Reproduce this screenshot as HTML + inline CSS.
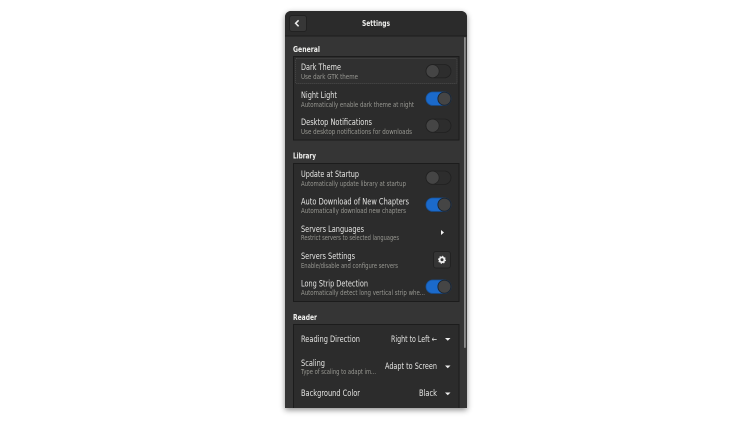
<!DOCTYPE html>
<html><head><meta charset="utf-8"><style>
html,body{margin:0;padding:0;background:#fff;width:752px;height:423px;overflow:hidden}
svg{display:block}
#c{filter:blur(.35px)}
text{font-family:"DejaVu Sans","Liberation Sans",sans-serif;font-size:8.5px}
.h{fill:#f0f0ee;font-weight:bold;font-size:8.2px}
.t{fill:#e6e6e4}
.s{fill:#989892;font-size:6.8px}
.l{fill:#2c2c2c;stroke:#1c1c1c;stroke-width:1}
</style></head><body>
<svg width="752" height="423" viewBox="0 0 752 423" xmlns="http://www.w3.org/2000/svg">
<defs>
<filter id="sh" x="-20%" y="-10%" width="140%" height="120%"><feDropShadow dx="0" dy="2" stdDeviation="3" flood-color="#000" flood-opacity=".45"/></filter>
<clipPath id="win"><path d="M285 408V17a6 6 0 0 1 6-6h170a6 6 0 0 1 6 6v391z"/></clipPath>
<g id="off"><rect x="0" y="0" width="25" height="13.4" rx="6.7" fill="#2d2d2d" stroke="#202020" stroke-width=".8"/><circle cx="6.6" cy="6.7" r="6.5" fill="#454545" stroke="#222" stroke-width=".7"/></g>
<g id="on"><rect x="0" y="0" width="25" height="13.4" rx="6.7" fill="#1b6acb" stroke="#15539e" stroke-width=".8"/><circle cx="18.4" cy="6.7" r="6.5" fill="#454545" stroke="#1a2430" stroke-width=".9"/></g>
</defs>
<path d="M285 408V17a6 6 0 0 1 6-6h170a6 6 0 0 1 6 6v391z" fill="#353535" filter="url(#sh)"/>
<g id="c" clip-path="url(#win)">
<rect x="285" y="11" width="182" height="24.5" fill="#2b2b2b"/>
<rect x="285" y="35.5" width="182" height="1" fill="#1d1d1d"/>
<rect x="289.500" y="15.500" width="17" height="16" rx="2.500" fill="#373737" stroke="#222"/>
<path d="M298.600 20.300L295.600 23.300L298.600 26.300" fill="none" stroke="#eee" stroke-width="1.500"/>
<text class="h" x="362" y="26" textLength="28" lengthAdjust="spacingAndGlyphs">Settings</text>
<rect x="464" y="37" width="1.800" height="311" rx=".9" fill="#8b8b8b"/>

<text class="h" x="293" y="52" textLength="27" lengthAdjust="spacingAndGlyphs">General</text>
<rect class="l" x="293.500" y="56.500" width="165.500" height="83.500"/>
<rect x="295.500" y="58.500" width="161.500" height="25" rx="1" fill="#303030" stroke="#555" stroke-width=".7" stroke-dasharray="1 1"/>
<text class="t" x="301" y="70" textLength="40" lengthAdjust="spacingAndGlyphs">Dark Theme</text>
<text class="s" x="301" y="79" textLength="57" lengthAdjust="spacingAndGlyphs">Use dark GTK theme</text>
<use href="#off" x="426" y="64.500"/>
<text class="t" x="301" y="98" textLength="36" lengthAdjust="spacingAndGlyphs">Night Light</text>
<text class="s" x="301" y="107" textLength="113" lengthAdjust="spacingAndGlyphs">Automatically enable dark theme at night</text>
<use href="#on" x="426" y="92"/>
<text class="t" x="301" y="125" textLength="71" lengthAdjust="spacingAndGlyphs">Desktop Notifications</text>
<text class="s" x="301" y="134" textLength="111" lengthAdjust="spacingAndGlyphs">Use desktop notifications for downloads</text>
<use href="#off" x="426" y="119"/>

<text class="h" x="293" y="158.500" textLength="23" lengthAdjust="spacingAndGlyphs">Library</text>
<rect class="l" x="293.500" y="163.500" width="165.500" height="138"/>
<text class="t" x="301" y="177" textLength="58" lengthAdjust="spacingAndGlyphs">Update at Startup</text>
<text class="s" x="301" y="186" textLength="105" lengthAdjust="spacingAndGlyphs">Automatically update library at startup</text>
<use href="#off" x="426" y="171"/>
<text class="t" x="301" y="204.500" textLength="108" lengthAdjust="spacingAndGlyphs">Auto Download of New Chapters</text>
<text class="s" x="301" y="213" textLength="105" lengthAdjust="spacingAndGlyphs">Automatically download new chapters</text>
<use href="#on" x="426" y="198"/>
<text class="t" x="301" y="232" textLength="63" lengthAdjust="spacingAndGlyphs">Servers Languages</text>
<text class="s" x="301" y="240" textLength="98" lengthAdjust="spacingAndGlyphs">Restrict servers to selected languages</text>
<path d="M441 230L444 232.500L441 235z" fill="#f2f2f2"/>
<text class="t" x="301" y="259" textLength="54" lengthAdjust="spacingAndGlyphs">Servers Settings</text>
<text class="s" x="301" y="268" textLength="97" lengthAdjust="spacingAndGlyphs">Enable/disable and configure servers</text>
<rect x="433.500" y="251.500" width="17" height="16.500" rx="2.500" fill="#353535" stroke="#222"/>
<circle cx="442" cy="259.800" r="2.400" fill="none" stroke="#f2f2f2" stroke-width="1.800"/>
<circle cx="442" cy="259.800" r="3.500" fill="none" stroke="#f2f2f2" stroke-width="1" stroke-dasharray="1.300 1.450"/>
<text class="t" x="301" y="286.500" textLength="67" lengthAdjust="spacingAndGlyphs">Long Strip Detection</text>
<text class="s" x="301" y="295" textLength="124" lengthAdjust="spacingAndGlyphs">Automatically detect long vertical strip whe...</text>
<use href="#on" x="426" y="280"/>

<text class="h" x="293" y="320" textLength="24" lengthAdjust="spacingAndGlyphs">Reader</text>
<rect class="l" x="293.500" y="324.500" width="165.500" height="100"/>
<text class="t" x="301" y="342" textLength="59" lengthAdjust="spacingAndGlyphs">Reading Direction</text>
<text class="t" x="391" y="342" textLength="46" lengthAdjust="spacingAndGlyphs">Right to Left ←</text>
<path d="M445 338h5.500l-2.750 2.800z" fill="#eee"/>
<text class="t" x="301" y="366" textLength="24" lengthAdjust="spacingAndGlyphs">Scaling</text>
<text class="s" x="301" y="374" textLength="75" lengthAdjust="spacingAndGlyphs">Type of scaling to adapt im...</text>
<text class="t" x="385" y="369" textLength="52" lengthAdjust="spacingAndGlyphs">Adapt to Screen</text>
<path d="M445 365.500h5.500l-2.750 2.800z" fill="#eee"/>
<text class="t" x="301" y="396" textLength="59" lengthAdjust="spacingAndGlyphs">Background Color</text>
<text class="t" x="419" y="396" textLength="18" lengthAdjust="spacingAndGlyphs">Black</text>
<path d="M445 392.500h5.500l-2.750 2.800z" fill="#eee"/>
</g>
</svg>
</body></html>
